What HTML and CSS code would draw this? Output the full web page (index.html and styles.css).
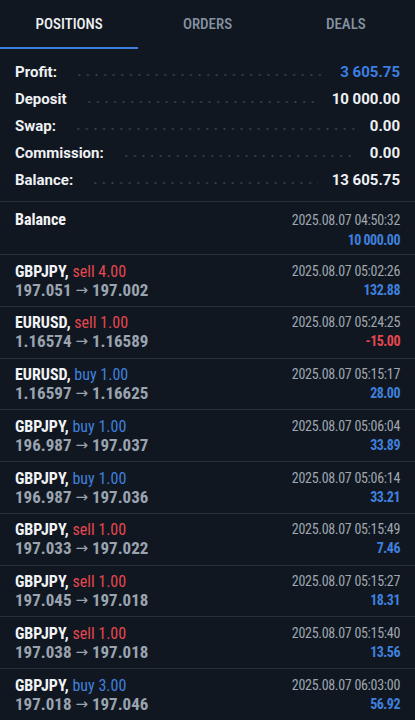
FILE: index.html
```html
<!DOCTYPE html>
<html>
<head>
<meta charset="utf-8">
<link rel="stylesheet" href="styles.css">
</head>
<body>
<div class="app">
  <nav class="tabs">
    <div class="tab active">POSITIONS</div>
    <div class="tab">ORDERS</div>
    <div class="tab">DEALS</div>
  </nav>

  <section class="summary">
    <div class="sum-row"><span class="lbl">Profit:</span><span class="dots"></span><span class="val blue">3 605.75</span></div>
    <div class="sum-row"><span class="lbl">Deposit</span><span class="dots"></span><span class="val">10 000.00</span></div>
    <div class="sum-row"><span class="lbl">Swap:</span><span class="dots"></span><span class="val">0.00</span></div>
    <div class="sum-row"><span class="lbl">Commission:</span><span class="dots"></span><span class="val">0.00</span></div>
    <div class="sum-row"><span class="lbl">Balance:</span><span class="dots"></span><span class="val">13 605.75</span></div>
  </section>

  <div class="deal balance-row">
    <div class="left"><div class="title">Balance</div></div>
    <div class="right"><div class="date">2025.08.07 04:50:32</div><div class="amt">10 000.00</div></div>
  </div>

  <div class="deal">
    <div class="left"><div class="title">GBPJPY, <span class="sell">sell 4.00</span></div><div class="price">197.051 <span class="arrow">→</span> 197.002</div></div>
    <div class="right"><div class="date">2025.08.07 05:02:26</div><div class="amt">132.88</div></div>
  </div>
  <div class="deal">
    <div class="left"><div class="title">EURUSD, <span class="sell">sell 1.00</span></div><div class="price">1.16574 <span class="arrow">→</span> 1.16589</div></div>
    <div class="right"><div class="date">2025.08.07 05:24:25</div><div class="amt neg">-15.00</div></div>
  </div>
  <div class="deal">
    <div class="left"><div class="title">EURUSD, <span class="buy">buy 1.00</span></div><div class="price">1.16597 <span class="arrow">→</span> 1.16625</div></div>
    <div class="right"><div class="date">2025.08.07 05:15:17</div><div class="amt">28.00</div></div>
  </div>
  <div class="deal">
    <div class="left"><div class="title">GBPJPY, <span class="buy">buy 1.00</span></div><div class="price">196.987 <span class="arrow">→</span> 197.037</div></div>
    <div class="right"><div class="date">2025.08.07 05:06:04</div><div class="amt">33.89</div></div>
  </div>
  <div class="deal">
    <div class="left"><div class="title">GBPJPY, <span class="buy">buy 1.00</span></div><div class="price">196.987 <span class="arrow">→</span> 197.036</div></div>
    <div class="right"><div class="date">2025.08.07 05:06:14</div><div class="amt">33.21</div></div>
  </div>
  <div class="deal">
    <div class="left"><div class="title">GBPJPY, <span class="sell">sell 1.00</span></div><div class="price">197.033 <span class="arrow">→</span> 197.022</div></div>
    <div class="right"><div class="date">2025.08.07 05:15:49</div><div class="amt">7.46</div></div>
  </div>
  <div class="deal">
    <div class="left"><div class="title">GBPJPY, <span class="sell">sell 1.00</span></div><div class="price">197.045 <span class="arrow">→</span> 197.018</div></div>
    <div class="right"><div class="date">2025.08.07 05:15:27</div><div class="amt">18.31</div></div>
  </div>
  <div class="deal">
    <div class="left"><div class="title">GBPJPY, <span class="sell">sell 1.00</span></div><div class="price">197.038 <span class="arrow">→</span> 197.018</div></div>
    <div class="right"><div class="date">2025.08.07 05:15:40</div><div class="amt">13.56</div></div>
  </div>
  <div class="deal">
    <div class="left"><div class="title">GBPJPY, <span class="buy">buy 3.00</span></div><div class="price">197.018 <span class="arrow">→</span> 197.046</div></div>
    <div class="right"><div class="date">2025.08.07 06:03:00</div><div class="amt">56.92</div></div>
  </div>
</div>
</body>
</html>
```

FILE: styles.css
```css
html, body {
  margin: 0;
  padding: 0;
  background: #111720;
}
.app {
  width: 415px;
  height: 720px;
  overflow: hidden;
  background: #111720;
  font-family: Roboto, "Noto Sans", sans-serif;
  color: #eef1f5;
}
.tabs {
  display: grid;
  grid-template-columns: 1fr 1fr 1fr;
  height: 49px;
}
.tab {
  display: flex;
  align-items: center;
  justify-content: center;
  font-size: 15px;
  font-weight: 500;
  font-stretch: 75%;
  color: #8593a3;
  box-sizing: border-box;
  border-bottom: 2px solid transparent;
}
.tab.active {
  color: #eef1f5;
  border-bottom-color: #3f7fdc;
}
.summary {
  padding: 9.5px 15px 7.5px;
  border-bottom: 1px solid #262e38;
}
.sum-row {
  display: flex;
  align-items: center;
  height: 27px;
  font-size: 15px;
  font-weight: 700;
}
.dots {
  flex: 1;
  height: 4px;
  margin: 5px 14px 0 18px;
  background-image: radial-gradient(circle, #38414c 0.9px, transparent 1.2px);
  background-size: 8.6px 4px;
  background-repeat: repeat-x;
  background-position: left center;
}
.val { color: #eef1f5; }
.blue { color: #3d7fe0; }
.deal {
  display: flex;
  justify-content: space-between;
  padding: 6.5px 15px 6.25px;
  border-bottom: 1px solid #272f39;
  line-height: 19px;
  font-stretch: 75%;
}
.balance-row {
  padding: 8px 15px 4px;
  line-height: 20px;
}
.left, .right {
  display: flex;
  flex-direction: column;
}
.title, .price, .date, .amt {
  height: 19px;
}
.balance-row .title, .balance-row .date, .balance-row .amt {
  height: 20px;
}
.title {
  font-size: 16px;
  font-weight: 700;
  color: #f1f3f6;
}
.sell { color: #e5484f; font-weight: 400; }
.buy { color: #3f80de; font-weight: 400; }
.price {
  font-size: 17px;
  font-weight: 700;
  color: #9aa4b1;
}
.arrow {
  font-family: "DejaVu Sans", sans-serif;
  font-stretch: 100%;
  font-weight: 400;
  font-size: 15px;
  line-height: 0;
  vertical-align: 1px;
}
.right {
  text-align: right;
}
.date {
  font-size: 14px;
  letter-spacing: -0.3px;
  color: #9ea6b1;
}
.amt {
  font-size: 14px;
  letter-spacing: -0.5px;
  font-weight: 700;
  color: #3f80de;
}
.amt.neg { color: #e5484f; }
```
